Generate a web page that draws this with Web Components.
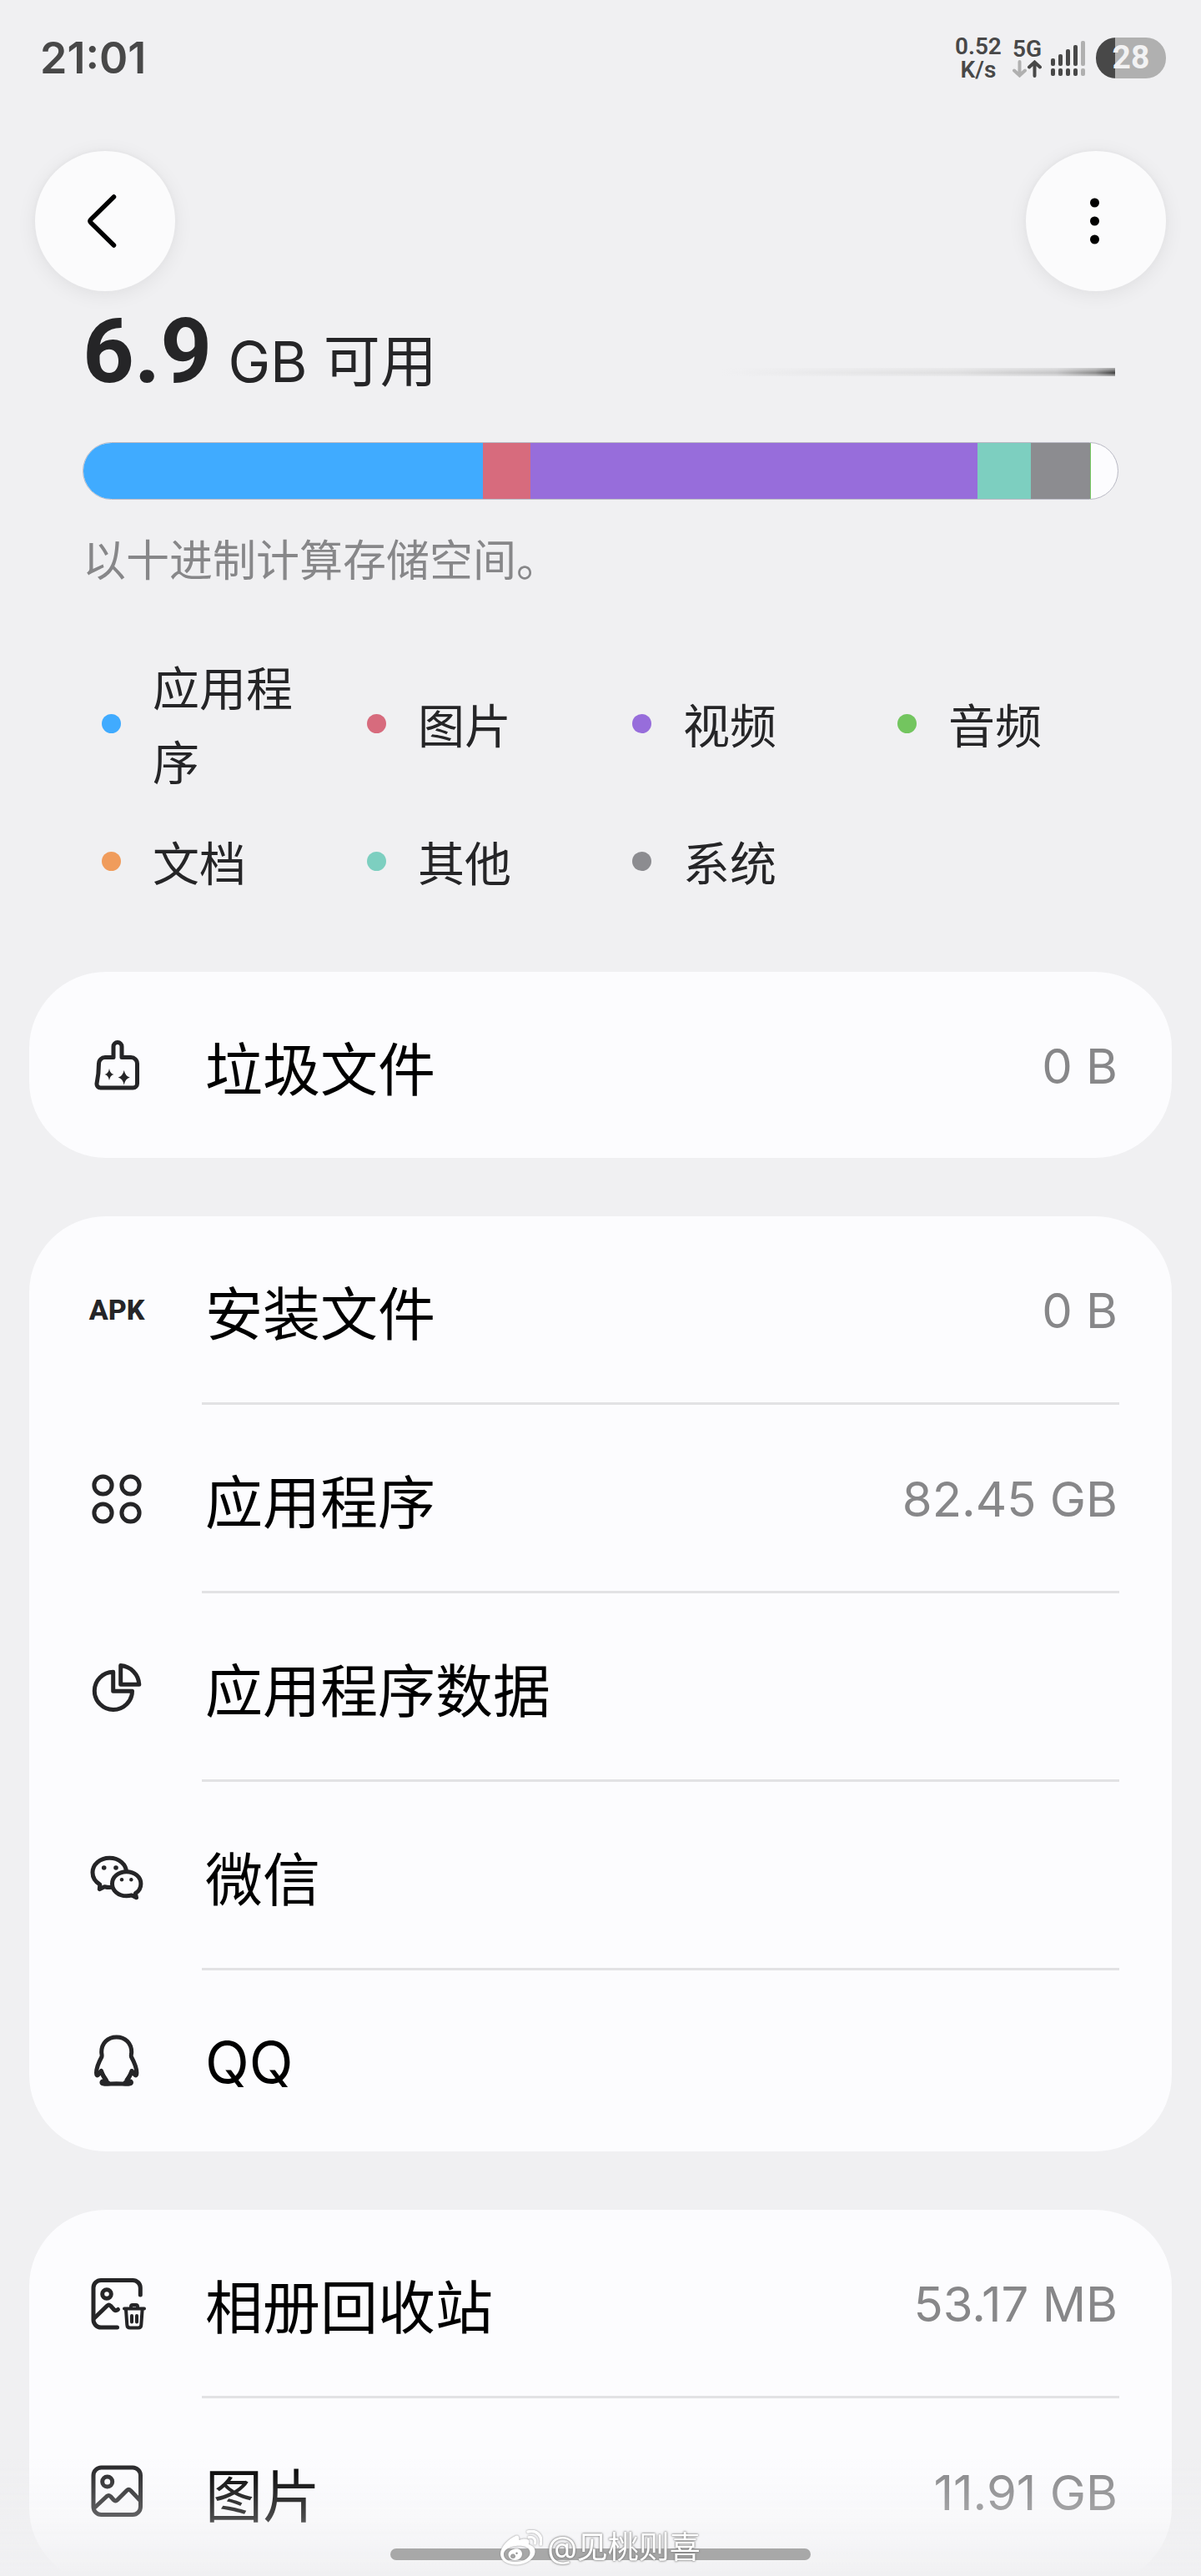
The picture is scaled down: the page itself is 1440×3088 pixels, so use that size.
<!DOCTYPE html>
<html lang="zh-CN">
<head>
<meta charset="utf-8">
<meta name="viewport" content="width=device-width, initial-scale=1">
<title>存储空间</title>
<style>
    body {
        margin: 0;
        background: #f0f0f2;
        color: #252527;
        font-family: Inter, "Noto Sans CJK SC", sans-serif;
    }
</style>
</head>
<body>
<app-screen>
    <status-bar slot="status" time="21:01" speed="0.52" network="5G" battery="28"></status-bar>
    <screen-header slot="header"></screen-header>

    <storage-summary amount="6.9" unit="GB 可用">
        <storage-bar slot="bar" parts="479:#40abff,57:#d76b7d,537:#976ddb,64:#7dcfc0,71:#8c8c90" free="32"></storage-bar>
        <span slot="note">以十进制计算存储空间。</span>
    </storage-summary>

    <legend-list>
        <legend-item color="#40abff">应用程序</legend-item>
        <legend-item color="#d76b7d">图片</legend-item>
        <legend-item color="#976ddb">视频</legend-item>
        <legend-item color="#73c55f">音频</legend-item>
        <legend-item color="#f09c5c">文档</legend-item>
        <legend-item color="#7dcfc0">其他</legend-item>
        <legend-item color="#8c8c90">系统</legend-item>
    </legend-list>

    <row-card>
        <storage-row icon="broom" value="0 B">垃圾文件</storage-row>
    </row-card>
    <row-card>
        <storage-row icon="apk" value="0 B">安装文件</storage-row>
        <storage-row icon="apps" value="82.45 GB">应用程序</storage-row>
        <storage-row icon="pie">应用程序数据</storage-row>
        <storage-row icon="wechat">微信</storage-row>
        <storage-row icon="qq">QQ</storage-row>
    </row-card>
    <row-card>
        <storage-row icon="album-trash" value="53.17 MB">相册回收站</storage-row>
        <storage-row icon="image" value="11.91 GB">图片</storage-row>
    </row-card>

    <nav-handle slot="overlay">@见桃则喜</nav-handle>
</app-screen>

<script>
const icons = {
    broom: `
        <path d="M37 8.500a5 5 0 0 1 5 5V26.500H53a7.500 7.500 0 0 1 7.500 7.500V58a5 5 0 0 1-5 5H16.500a4.500 4.500 0 0 1-4.500-5C13.500 51 14.500 44 14.500 34a7.500 7.500 0 0 1 7.500-7.500H32V13.500a5 5 0 0 1 5-5z"/>
        <path class="fill" d="M27 40q1 6 5.500 7q-4.500 1-5.500 7q-1-6-5.500-7q4.500-1 5.500-7zM44.700 42q1.500 7 7 8.500q-5.500 1.500-7 9q-1.500-7.500-7-9q5.500-1.500 7-8.500z"/>`,
    apps: `
        <circle cx="19.500" cy="20.500" r="10.600"/><circle cx="52.500" cy="20.500" r="10.600"/>
        <circle cx="19.500" cy="53.500" r="10.600"/><circle cx="52.500" cy="53.500" r="10.600"/>`,
    pie: `
        <path d="M31.700 18.300V41.200H54.500A22.600 22.600 0 1 1 31.700 18.300z"/>
        <path d="M40.700 10.500V33.200H62.800A24 24 0 0 0 40.700 10.500z"/>`,
    wechat: `
        <path d="M27.300 15.200c11.500 0 20.300 7.700 20.300 17.600S39 50.500 27.300 50.500c-2.500 0-4-.3-6-.8l-6 3 .5-5.500C10 43.500 7 38.500 7 32.800 7 23 15.800 15.200 27.300 15.200z"/>
        <path class="cover" d="M47.700 31.700c9.800 0 17.200 6.300 17.200 14.500 0 4.700-2.600 9-6.500 11.500l1.100 5-5.500-2.800c-2 .6-4 .9-6.300.9-9.800 0-17.200-6.400-17.200-14.600s7.400-14.500 17.200-14.500z"/>
        <g class="fill"><circle cx="20.700" cy="27" r="2.800"/><circle cx="35" cy="27" r="2.800"/><circle cx="42" cy="41.300" r="2.200"/><circle cx="53.300" cy="41.300" r="2.200"/></g>`,
    qq: `
        <path d="M35.700 7C25 7 17.700 14.500 17.700 25c0 2 .8 3.500 .3 5.500C14.500 37 11.500 43 11.500 50c0 3 1 3.500 2.500 2l3.500-4.500c1 4.500 3.500 8.500 6 11-3.500 .3-6 1.500-5.500 3.500 .5 2 8 1 17.700 .8 9.700 .2 17.200 1.200 17.700-.8 .5-2-2-3.200-5.500-3.500 2.500-2.500 5-6.500 6-11l3.500 4.500c1.500 1.500 2.500 1 2.500-2 0-7-3-13-6.500-19.500-.5-2 .3-3.500 .3-5.500C53.700 14.500 46.400 7 35.700 7z"/>
        <path d="M17 48l5 9M54.400 48l-5 9M20.500 61.500h5M46 61.500h5"/>`,
    "album-trash": `
        <path d="M64.300 26V17.500A9 9 0 0 0 55.300 8.500H17A9 9 0 0 0 8 17.500V56a9 9 0 0 0 9 9H36.500"/>
        <circle cx="24" cy="25" r="5.300"/>
        <path d="M9.500 53.500L24.500 39q2-1.800 4 0l4.500 5q2 1.500 4.500-.500"/>
        <g stroke-width="4"><path d="M45 42.500H69M53 42V40q0-2 2-2h4q2 0 2 2v2M47 43.500l1.300 18.500q.3 3.500 3.500 3.500h10q3.200 0 3.500-3.500l1.300-18.500"/><path d="M54 51v7.500M60 51v7.500"/></g>`,
    image: `
        <rect x="8" y="7" width="56.500" height="56.500" rx="9.500"/>
        <circle cx="24.700" cy="24" r="6"/>
        <path d="M9.500 55L24 41.500q2.300-2 4.500 0l4 4.500q2 2 4 0L48 34.500q2.300-2.200 4.600 0L63.500 46"/>`
};

// Shared base: stamps the template into an open shadow root
class BaseElement extends HTMLElement {
    constructor() {
        super();
        this.attachShadow({mode: 'open'});
        this.shadowRoot.innerHTML = this.render();
    }

    attr(name) {
        return this.getAttribute(name) || "";
    }
}

window.customElements.define("app-screen", class extends BaseElement {
    render() {
        return `
            <style>
                :host {
                    display: flex;
                    flex-direction: column;
                    height: 100vh;
                    overflow: hidden;
                }

                main {
                    flex: 1 0 auto;
                    display: flex;
                    flex-direction: column;
                }

                ::slotted(row-card) {
                    margin: 0 35px 70px;
                }
            </style>
            <slot name="status"></slot>
            <slot name="header"></slot>
            <main><slot></slot></main>
            <slot name="overlay"></slot>
        `;
    }
});

window.customElements.define("status-bar", class extends BaseElement {
    render() {
        const tops = [21, 16, 10, 5, 0];
        const bars = tops.map((y, i) => `
            <g fill="${i < 4 ? "#484848" : "#b0b0b0"}">
                <rect x="${i * 9}" y="${y}" width="5" height="${30 - y}" rx="2"/>
                <rect x="${i * 9}" y="33" width="5" height="9" rx="2"/>
            </g>`).join("");
        return `
            <style>
                :host {
                    display: flex;
                    align-items: center;
                    justify-content: space-between;
                    height: 49px;
                    padding: 45px 42px 0 48px;
                    color: #484848;
                }

                time {
                    font-size: 52px;
                    font-weight: 600;
                    line-height: 49px;
                }

                .side {
                    display: flex;
                    align-items: center;
                    font: 600 28px/26px Roboto, sans-serif;
                    text-align: center;
                }

                .speed {
                    width: 56px;
                    line-height: 28px;
                }

                .network {
                    margin-left: 13px;
                }

                svg {
                    display: block;
                }

                .signal {
                    margin: 0 13px 0 11px;
                }

                .battery {
                    width: 84px;
                    border-radius: 24px;
                    background: linear-gradient(90deg, #484848 27%, #b0b0b0 27%);
                    color: #f2f2f3;
                    font-size: 39px;
                    font-weight: 700;
                    line-height: 49px;
                }
            </style>
            <time>${this.attr("time")}</time>
            <div class="side">
                <div class="speed">${this.attr("speed")}<br>K/s</div>
                <div class="network">${this.attr("network")}
                    <svg width="35" height="21" viewBox="0 0 35 21" fill="none" stroke-width="4" stroke-linecap="round">
                        <path stroke="#b0b0b0" d="M8.500 2V18M2 12.500L8.500 18.500L15 12.500"/>
                        <path stroke="#484848" d="M26.500 19V3M20 8.500L26.500 2.500L33 8.500"/>
                    </svg>
                </div>
                <svg class="signal" width="41" height="42" viewBox="0 0 41 42">${bars}</svg>
                <div class="battery">${this.attr("battery")}</div>
            </div>
        `;
    }
});

window.customElements.define("screen-header", class extends BaseElement {
    render() {
        return `
            <style>
                :host {
                    display: flex;
                    justify-content: space-between;
                    padding: 87px 42px 0;
                }

                button {
                    width: 168px;
                    height: 168px;
                    padding: 0;
                    border: 0;
                    border-radius: 50%;
                    background: #fbfbfc;
                    box-shadow: 0 0 3px 2px #e6e6e8, 0 4px 24px #00000012;
                }

                svg {
                    display: block;
                }
            </style>
            <button aria-label="返回">
                <svg width="168" height="168" viewBox="0 0 168 168" fill="none" stroke="#000" stroke-width="5.500" stroke-linecap="round" stroke-linejoin="round">
                    <path d="M94.500 55L67 82q-2 2 0 4L94.500 113"/>
                </svg>
            </button>
            <button aria-label="更多选项">
                <svg width="168" height="168" viewBox="0 0 168 168">
                    <circle cx="82.500" cy="62" r="5.500"/><circle cx="82.500" cy="84" r="5.500"/><circle cx="82.500" cy="106" r="5.500"/>
                </svg>
            </button>
        `;
    }
});

window.customElements.define("storage-summary", class extends BaseElement {
    render() {
        return `
            <style>
                :host {
                    display: block;
                    padding: 20px 99px 0;
                }

                .title {
                    display: flex;
                    align-items: flex-end;
                    justify-content: space-between;
                    padding-bottom: 45px;
                }

                p {
                    margin: 0;
                    font-size: 68px;
                    line-height: 104px;
                }

                strong {
                    font-family: Roboto, sans-serif;
                    font-size: 108px;
                    font-weight: 700;
                }

                .trail {
                    width: 38%;
                    height: 10px;
                    margin: 0 4px 34px 0;
                    background:
                        linear-gradient(#f0f0f2aa, transparent 60%, #f0f0f2aa),
                        linear-gradient(90deg, transparent, #dededf 60%, #c4c4c5 85%, #8a8a8a 95%, #3c3c3c);
                }

                .note {
                    margin-top: 36px;
                    color: #878789;
                    font-size: 52px;
                    line-height: 76px;
                }
            </style>
            <div class="title">
                <p><strong>${this.attr("amount")}</strong> ${this.attr("unit")}</p>
                <div class="trail"></div>
            </div>
            <slot name="bar"></slot>
            <p class="note"><slot name="note"></slot></p>
        `;
    }
});

window.customElements.define("storage-bar", class extends BaseElement {
    render() {
        const parts = this.attr("parts").split(",").map(part => {
            const [size, color] = part.split(":");
            return `<i style="flex: ${size}; background: ${color}"></i>`;
        }).join("");
        return `
            <style>
                :host {
                    display: flex;
                    height: 67px;
                    overflow: hidden;
                    border: 1px solid #b9b9c4;
                    border-radius: 35px;
                    background: #fcfcfe;
                }

                .free {
                    border-left: 1px solid #73c55f;
                }
            </style>
            ${parts}<i class="free" style="flex: ${this.attr("free")}"></i>
        `;
    }
});

window.customElements.define("legend-list", class extends BaseElement {
    render() {
        return `
            <style>
                :host {
                    display: grid;
                    grid-template-columns: repeat(4, 1fr);
                    row-gap: 32px;
                    padding: 71px 84px 84px;
                }
            </style>
            <slot></slot>
        `;
    }
});

window.customElements.define("legend-item", class extends BaseElement {
    render() {
        return `
            <style>
                :host {
                    display: flex;
                    align-items: center;
                    gap: 38px;
                    padding: 0 0 0 38px;
                    font-size: 56px;
                    line-height: 89px;
                }

                i {
                    flex: none;
                    width: 23px;
                    height: 23px;
                    margin-bottom: 8px;
                    border-radius: 50%;
                    background: ${this.attr("color")};
                }
            </style>
            <i></i><span><slot></slot></span>
        `;
    }
});

window.customElements.define("row-card", class extends BaseElement {
    render() {
        return `
            <style>
                :host {
                    display: block;
                    border-radius: 92px;
                    background: #fcfcfe;
                }

                ::slotted(:not(:last-child)) {
                    --divider: #e2e2e4;
                    --divider-size: 3px;
                }
            </style>
            <slot></slot>
        `;
    }
});

window.customElements.define("storage-row", class extends BaseElement {
    render() {
        const name = this.attr("icon");
        const icon = name === "apk"
            ? `<span class="icon">APK</span>`
            : `<svg class="icon" viewBox="0 0 72 72">${icons[name]}</svg>`;
        return `
            <style>
                :host {
                    display: block;
                    padding: 0 63px 0 69px;
                }

                a {
                    display: flex;
                    align-items: center;
                    gap: 66px;
                    color: #000;
                    text-decoration: none;
                }

                .icon {
                    flex: none;
                    display: flex;
                    align-items: center;
                    justify-content: center;
                    width: 72px;
                    height: 72px;
                    color: #252527;
                    font: 800 34px/72px Roboto, sans-serif;
                }

                svg {
                    fill: none;
                    stroke: #252527;
                    stroke-width: 5;
                    stroke-linecap: round;
                    stroke-linejoin: round;
                }

                .fill {
                    fill: #252527;
                    stroke: none;
                }

                .cover {
                    fill: #fcfcfe;
                }

                .text {
                    flex: 1;
                    display: flex;
                    align-items: center;
                    justify-content: space-between;
                    box-sizing: border-box;
                    min-height: 217px;
                    padding: 63px 2px 60px 4px;
                }

                .label {
                    font-size: 69px;
                }

                .value {
                    color: #878789;
                    font-size: 58px;
                }

                hr {
                    height: var(--divider-size, 0);
                    margin: 0 0 0 138px;
                    border: 0;
                    background: var(--divider, none);
                }
            </style>
            <a href="#${name}">
                ${icon}
                <span class="text">
                    <span class="label"><slot></slot></span>
                    <span class="value">${this.attr("value")}</span>
                </span>
            </a>
            <hr>
        `;
    }
});

window.customElements.define("nav-handle", class extends BaseElement {
    render() {
        return `
            <style>
                :host {
                    position: fixed;
                    inset: auto 0 0;
                    display: grid;
                    justify-items: center;
                    align-items: end;
                    height: 140px;
                    background: linear-gradient(transparent, #f0f0f24d 50%, #f0f0f2);
                }

                .handle, .mark {
                    grid-area: 1 / 1;
                }

                .handle {
                    width: 35%;
                    height: 14px;
                    margin-bottom: 19px;
                    border-radius: 7px;
                    background: #a8a8a8;
                }

                .mark {
                    display: flex;
                    align-items: center;
                    gap: 6px;
                    margin-bottom: 10px;
                    color: #fff;
                    font-size: 37px;
                    line-height: 48px;
                    text-shadow: 0 0 3px #777, 0 0 2px #888;
                }

                svg {
                    filter: drop-shadow(0 0 1px #888);
                }
            </style>
            <div class="handle"></div>
            <div class="mark">
                <svg width="50" height="42" viewBox="0 0 50 42" fill="#fff">
                    <path fill-rule="evenodd" d="M18 7c3-1.500 5 .5 4.500 5 4-1.500 8-2 10.500-.5 2 1.200 1.500 3.500 .8 5.500 4 1.200 7.700 3.500 7.700 8.500C41.500 34 31 41.500 18.500 41.500 8 41.500 0 36.500 0 28.500 0 20 10 10 18 7zM4 30c.8 6 7.500 8.500 16 8 9-.7 16-5.500 15.500-11.500S27.500 18 18.500 19C9.500 19.800 3.300 24.500 4 30z"/>
                    <path fill-rule="evenodd" d="M17 22.500c5-1.200 9 1.500 9 6 0 4.200-3.700 7.500-8.500 7.500s-8-3-8-6.500 3.200-6 7.500-7zM15 28.500a3 2.800 0 1 0 .1 0zM19.500 26.500a1.300 1.200 0 1 0 .1 0z"/>
                    <path d="M33 2C43-1 51 7 48.500 17" fill="none" stroke="#fff" stroke-width="3.500" stroke-linecap="round"/>
                    <path d="M34 8.500c5-1.200 9 2.500 7.500 7.500" fill="none" stroke="#fff" stroke-width="3" stroke-linecap="round"/>
                </svg>
                <span><slot></slot></span>
            </div>
        `;
    }
});
</script>
</body>
</html>
